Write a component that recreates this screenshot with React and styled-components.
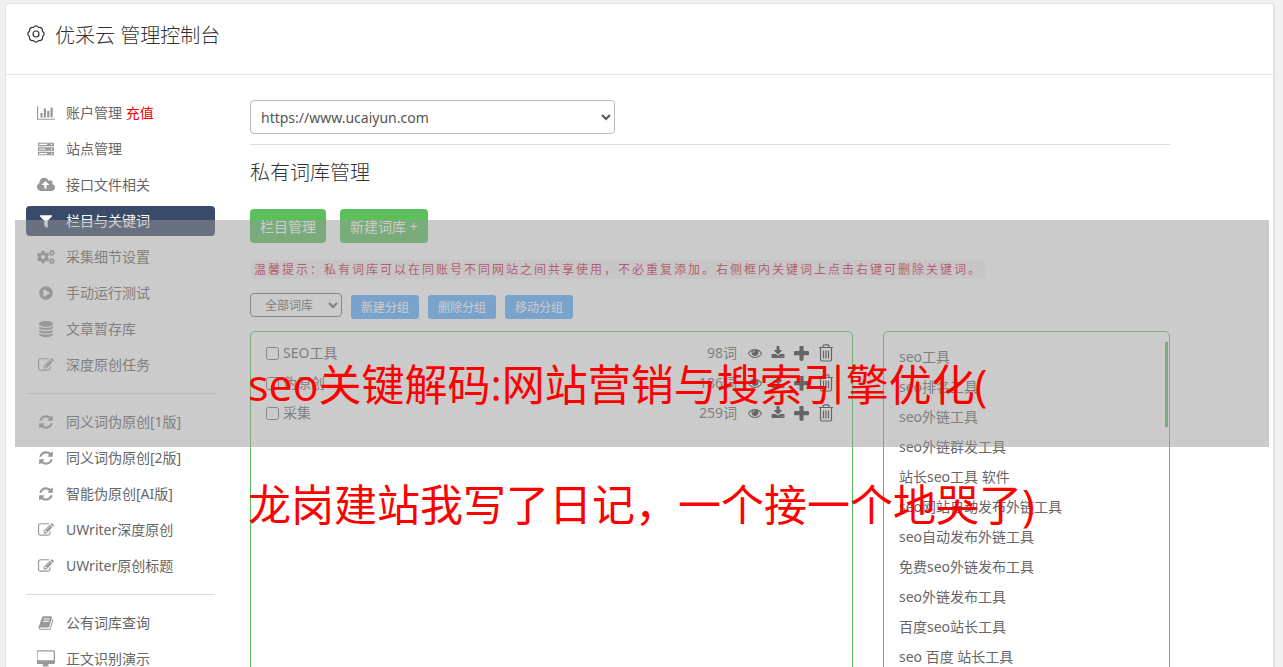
import React from 'react';
import styled, { createGlobalStyle } from 'styled-components';
import { FaCogs, FaPlayCircle } from 'react-icons/fa';

const ICONS = {
  chart: ['0 0 2048 1792', 'M640 896v512h-256v-512h256zm384-512v1024h-256v-1024h256zm1024 1152v128h-2048v-1536h128v1408h1920zm-640-896v768h-256v-768h256zm384-384v1152h-256v-1152h256z'],
  server: ['0 0 1792 1792', 'M0 192h1792v384h-1792zM128 320v128h900v-128zM1440 310v140h150v-140zM0 704h1792v384h-1792zM128 832v128h700v-128zM1440 822v140h150v-140zM0 1216h1792v384h-1792zM128 1344v128h900v-128zM1440 1334v140h150v-140z'],
  cloud: ['0 0 1920 1792', 'M1280 864q0-14-9-23l-352-352q-9-9-23-9t-23 9l-351 351q-10 12-10 24 0 14 9 23t23 9h224v352q0 13 9.5 22.5t22.5 9.5h192q13 0 22.5-9.5t9.5-22.5v-352h224q13 0 22.5-9.5t9.5-22.5zm640 288q0 159-112.5 271.5t-271.5 112.5h-1088q-185 0-316.5-131.5t-131.5-316.5q0-130 70-240t188-165q-2-30-2-43 0-212 150-362t362-150q156 0 285.5 87t188.5 231q71-62 166-62 106 0 181 75t75 181q0 76-41 138 130 31 213.5 135.5t83.5 238.5z'],
  filter: ['0 0 1792 1792', 'M1595 295q17 41-14 70l-493 493v742q0 42-39 59-13 5-25 5-27 0-45-19l-256-256q-19-19-19-45v-486l-493-493q-31-29-14-70 17-39 59-39h1280q42 0 59 39z'],
  database: ['0 0 1792 1792', 'M896 768q237 0 443-43t325-127v170q0 69-103 128t-280 93.5-385 34.5-385-34.5-280-93.5-103-128v-170q119 84 325 127t443 43zm0 768q237 0 443-43t325-127v170q0 69-103 128t-280 93.5-385 34.5-385-34.5-280-93.5-103-128v-170q119 84 325 127t443 43zm0-384q237 0 443-43t325-127v170q0 69-103 128t-280 93.5-385 34.5-385-34.5-280-93.5-103-128v-170q119 84 325 127t443 43zm0-1152q208 0 385 34.5t280 93.5 103 128v128q0 69-103 128t-280 93.5-385 34.5-385-34.5-280-93.5-103-128v-128q0-69 103-128t280-93.5 385-34.5z'],
  edit: ['0 0 1792 1792', 'M888 1184l116-116-152-152-116 116v56h96v96h56zm440-720q-16-16-33 1l-350 350q-17 17-1 33t33-1l350-350q17-17 1-33zm80 594v190q0 119-84.5 203.5t-203.5 84.5h-832q-119 0-203.5-84.5t-84.5-203.5v-832q0-119 84.5-203.5t203.5-84.5h832q63 0 117 25 15 7 18 23 3 17-9 29l-49 49q-14 14-32 8-23-6-45-6h-832q-66 0-113 47t-47 113v832q0 66 47 113t113 47h832q66 0 113-47t47-113v-126q0-13 9-22l64-64q15-15 35-7t20 29zm-96-738l288 288-672 672h-288v-288zm444 132l-92 92-288-288 92-92q28-28 68-28t68 28l152 152q28 28 28 68t-28 68z'],
  refresh: ['0 0 1792 1792', 'M1639 1056q0 5-1 7-64 268-268 434.5t-478 166.5q-146 0-282.5-55t-243.5-157l-129 129q-19 19-45 19t-45-19-19-45v-448q0-26 19-45t45-19h448q26 0 45 19t19 45-19 45l-137 137q71 66 161 102t187 36q134 0 250-65t186-179q11-17 53-117 8-23 30-23h192q13 0 22.5 9.5t9.5 22.5zm25-800v448q0 26-19 45t-45 19h-448q-26 0-45-19t-19-45 19-45l138-138q-148-137-349-137-134 0-250 65t-186 179q-11 17-53 117-8 23-30 23h-199q-13 0-22.5-9.5t-9.5-22.5v-7q65-268 270-434.5t480-166.5q146 0 284 55.5t245 156.5l130-129q19-19 45-19t45 19 19 45z'],
  book: ['0 0 1792 1792', 'M1703 478q40 57 18 129l-275 906q-19 64-76.5 107.5t-122.5 43.5h-923q-77 0-148.5-53.5t-99.5-131.5q-24-67-2-127 0-4 3-27t4-37q1-8-3-21.5t-3-19.5q2-11 8-21t16.5-23.5 16.5-23.5q23-38 45-91.5t30-91.5q3-10 .5-30t-.5-28q3-11 17-28t17-23q21-36 42-92t25-90q1-9-2.5-32t.5-28q4-13 22-30.5t22-22.5q19-26 42.5-84.5t27.5-96.5q1-8-3-25.5t-2-26.5q2-8 9-18t18-23 17-21q8-12 16.5-30.5t15-35 16-36 19.5-32 26.5-23.5 36-11.5 47.5 5.5l-1 3q38-9 51-9h761q74 0 114 56t18 130l-274 906q-36 119-71.5 153.5t-128.5 34.5h-869q-27 0-38 15-11 16-1 43 24 70 144 70h923q29 0 56-15.5t35-41.5l300-987q7-22 5-57 38 15 59 43zm-1064 2q-4 13 2 22.5t20 9.5h608q13 0 25.5-9.5t16.5-22.5l21-64q4-13-2-22.5t-20-9.5h-608q-13 0-25.5 9.5t-16.5 22.5zm-83 256q-4 13 2 22.5t20 9.5h608q13 0 25.5-9.5t16.5-22.5l21-64q4-13-2-22.5t-20-9.5h-608q-13 0-25.5 9.5t-16.5 22.5z'],
  desktop: ['0 0 1856 1792', 'M1728 992v-832q0-13-9.5-22.5t-22.5-9.5h-1600q-13 0-22.5 9.5t-9.5 22.5v832q0 13 9.5 22.5t22.5 9.5h1600q13 0 22.5-9.5t9.5-22.5zm128-832v1088q0 66-47 113t-113 47h-544q0 37 16 77.5t32 71 16 43.5q0 26-19 45t-45 19h-512q-26 0-45-19t-19-45q0-14 16-44t32-70 16-78h-544q-66 0-113-47t-47-113v-1088q0-66 47-113t113-47h1600q66 0 113 47t47 113z'],
  eye: ['0 0 1792 1792', 'M1664 960q-152-236-381-353 61 104 61 225 0 185-131.5 316.5t-316.5 131.5-316.5-131.5-131.5-316.5q0-121 61-225-229 117-381 353 133 205 333.5 326.5t434.5 121.5 434.5-121.5 333.5-326.5zm-720-384q0-20-14-34t-34-14q-125 0-214.5 89.5t-89.5 214.5q0 20 14 34t34 14 34-14 14-34q0-86 61-147t147-61q20 0 34-14t14-34zm848 384q0 34-20 69-140 230-376.5 368.5t-499.5 138.5-499.5-139-376.5-368q-20-35-20-69t20-69q140-229 376.5-368t499.5-139 499.5 139 376.5 368q20 35 20 69z'],
  download: ['0 0 1792 1792', 'M1344 1344q0-26-19-45t-45-19-45 19-19 45 19 45 45 19 45-19 19-45zm256 0q0-26-19-45t-45-19-45 19-19 45 19 45 45 19 45-19 19-45zm128-224v320q0 40-28 68t-68 28h-1472q-40 0-68-28t-28-68v-320q0-40 28-68t68-28h465l135 136q58 56 136 56t136-56l136-136h464q40 0 68 28t28 68zm-325-569q17 41-14 70l-448 448q-18 19-45 19t-45-19l-448-448q-31-29-14-70 17-39 59-39h256v-448q0-26 19-45t45-19h256q26 0 45 19t19 45v448h256q42 0 59 39z'],
  plus: ['192 160 1408 1408', 'M1600 736v192q0 40-28 68t-68 28h-416v416q0 40-28 68t-68 28h-192q-40 0-68-28t-28-68v-416h-416q-40 0-68-28t-28-68v-192q0-40 28-68t68-28h416v-416q0-40 28-68t68-28h192q40 0 68 28t28 68v416h416q40 0 68 28t28 68z'],
};

const Icon = ({ name, size = 16 }) => {
  if (name === 'cogs') return <FaCogs size={18} />;
  if (name === 'play') return <FaPlayCircle size={14} />;
  const [box, d] = ICONS[name];
  return (
    <svg width={size} height={size} viewBox={box} fill="currentColor" aria-hidden="true">
      <path fillRule="evenodd" d={d} />
    </svg>
  );
};

const GearIcon = () => (
  <svg width="20" height="20" viewBox="0 0 20 20" fill="none" stroke="currentColor" strokeWidth="1.2" aria-hidden="true">
    <path d="M16.500 12.700Q16.900 16.900 12.700 16.500Q10 19.900 7.300 16.500Q3.100 16.900 3.500 12.700Q.1 10 3.500 7.300Q3.100 3.100 7.300 3.500Q10 .1 12.700 3.500Q16.900 3.100 16.500 7.300Q19.900 10 16.500 12.700z" />
    <circle cx="10" cy="10" r="3" />
  </svg>
);

const TrashIcon = () => (
  <svg width="16" height="18" viewBox="0 0 16 18" fill="none" stroke="currentColor" strokeWidth="1.2" aria-hidden="true">
    <path d="M1 3.500h14M5 3.400V2q0-1.200 1.200-1.200h3.600q1.200 0 1.200 1.200v1.400M2.500 3.800v11.500q0 1.700 1.500 1.700h8q1.500 0 1.500-1.700V3.800M5.500 6.500v8M8 6.500v8M10.500 6.500v8" />
  </svg>
);

const MENU = [
  [
    { icon: 'chart', text: '账户管理', extra: '充值' },
    { icon: 'server', text: '站点管理' },
    { icon: 'cloud', text: '接口文件相关' },
    { icon: 'filter', text: '栏目与关键词', active: true },
    { icon: 'cogs', text: '采集细节设置' },
    { icon: 'play', text: '手动运行测试' },
    { icon: 'database', text: '文章暂存库' },
    { icon: 'edit', text: '深度原创任务' },
  ],
  [
    { icon: 'refresh', text: '同义词伪原创[1版]' },
    { icon: 'refresh', text: '同义词伪原创[2版]' },
    { icon: 'refresh', text: '智能伪原创[AI版]' },
    { icon: 'edit', text: 'UWriter深度原创' },
    { icon: 'edit', text: 'UWriter原创标题' },
  ],
  [
    { icon: 'book', text: '公有词库查询' },
    { icon: 'desktop', text: '正文识别演示' },
  ],
];

const LIBS = [
  { name: 'SEO工具', count: 98 },
  { name: '伪原创', count: 186 },
  { name: '采集', count: 259 },
];

const WORDS = [
  'seo工具',
  'seo排名工具',
  'seo外链工具',
  'seo外链群发工具',
  '站长seo工具 软件',
  'seo网站自动发布外链工具',
  'seo自动发布外链工具',
  '免费seo外链发布工具',
  'seo外链发布工具',
  '百度seo站长工具',
  'seo 百度 站长工具',
];

const App = () => {
  return (
    <>
      <GlobalStyle />
      <Page>
        <Header>
          <GearIcon />
          <Title>优采云 管理控制台</Title>
        </Header>
        <Body>
          <Sidebar>
            {MENU.map((group, i) => (
              <MenuGroup key={i}>
                {group.map(({ icon, text, extra, active }) => (
                  <li key={text}>
                    <MenuLink href="#" $active={active}>
                      <MenuIcon $active={active}>
                        <Icon name={icon} size={icon === 'chart' || icon === 'cloud' || icon === 'desktop' ? 18 : 16} />
                      </MenuIcon>
                      <span>
                        {text} {extra && <Recharge>{extra}</Recharge>}
                      </span>
                    </MenuLink>
                  </li>
                ))}
              </MenuGroup>
            ))}
          </Sidebar>
          <Content>
            <SiteBar>
              <SiteSelect aria-label="站点">
                <option>https://www.ucaiyun.com</option>
              </SiteSelect>
            </SiteBar>
            <SubTitle>私有词库管理</SubTitle>
            <ButtonRow>
              <GreenButton>栏目管理</GreenButton>
              <GreenButton>新建词库 +</GreenButton>
            </ButtonRow>
            <Tip>温馨提示：私有词库可以在同账号不同网站之间共享使用，不必重复添加。右侧框内关键词上点击右键可删除关键词。</Tip>
            <GroupBar>
              <GroupSelect aria-label="词库分组">
                <option>全部词库</option>
              </GroupSelect>
              <BlueButton>新建分组</BlueButton>
              <BlueButton>删除分组</BlueButton>
              <BlueButton>移动分组</BlueButton>
            </GroupBar>
            <Panels>
              <LibPanel>
                {LIBS.map(({ name, count }) => (
                  <LibRow key={name}>
                    <LibLabel>
                      <Check type="checkbox" />
                      {name}
                    </LibLabel>
                    <Count>{count}词</Count>
                    <Actions>
                      <ActionButton aria-label="查看"><Icon name="eye" size={14} /></ActionButton>
                      <ActionButton aria-label="下载"><Icon name="download" size={14} /></ActionButton>
                      <ActionButton aria-label="添加"><Icon name="plus" size={15} /></ActionButton>
                      <ActionButton aria-label="删除"><TrashIcon /></ActionButton>
                    </Actions>
                  </LibRow>
                ))}
              </LibPanel>
              <WordPanel>
                <WordList>
                  {WORDS.map((word) => (
                    <li key={word}>{word}</li>
                  ))}
                </WordList>
                <ScrollThumb />
              </WordPanel>
            </Panels>
          </Content>
        </Body>
      </Page>
      <Shade />
      <Caption>
        <p>seo关键解码:网站营销与搜索引擎优化(</p>
        <p>龙岗建站我写了日记，一个接一个地哭了)</p>
      </Caption>
    </>
  );
};

const GlobalStyle = createGlobalStyle`
* {
  box-sizing: border-box;
}
html {
  height: 100%;
  overflow: hidden;
}
body {
  margin: 0;
  height: 100%;
  overflow: hidden;
  background-color: #f1f1f1;
  color: #666;
  font-family: "Noto Sans", "Noto Sans CJK SC", sans-serif;
  font-size: 14px;
  font-weight: 400;
  line-height: 20px;
}
button, select, input {
  font-family: inherit;
  font-weight: inherit;
}
ul, p {
  margin: 0;
  padding: 0;
  list-style: none;
}
`;

const Page = styled.div`
margin: 3px 8px 0 5px;
border: 1px solid #e4e4e4;
border-right-width: 2px;
border-radius: 4px 4px 0 0;
background-color: #fff;
`;

const Header = styled.header`
display: flex;
align-items: center;
height: 71px;
padding: 0 20px 10px;
gap: 9px;
border-bottom: 1px solid #e4e4e4;
color: #333;
`;

const Title = styled.h1`
margin: 0;
padding-top: 4px;
font-size: 20px;
font-weight: 300;
line-height: 30px;
`;

const Body = styled.div`
display: flex;
padding: 23px 103px 0 20px;
gap: 35px;
`;

const Sidebar = styled.nav`
flex: 0 0 189px;
`;

const MenuGroup = styled.ul`
display: flex;
flex-direction: column;
gap: 6px;

& + & {
  margin-top: 13px;
  padding-top: 13px;
  border-top: 1px solid #ddd;
}
`;

const MenuLink = styled.a`
display: flex;
align-items: center;
height: 30px;
padding-left: 10px;
gap: 10px;
border-radius: 4px;
background-color: ${(props) => (props.$active ? '#3a4b69' : 'transparent')};
color: ${(props) => (props.$active ? '#fff' : '#666')};
text-decoration: none;
`;

const MenuIcon = styled.span`
display: flex;
justify-content: center;
width: 20px;
color: ${(props) => (props.$active ? '#fff' : '#999')};
`;

const Recharge = styled.span`
color: #f00;
`;

const Content = styled.main`
flex: 1;
min-width: 0;
padding-top: 2px;
`;

const SiteBar = styled.div`
padding-bottom: 10px;
border-bottom: 1px solid #ddd;
`;

const SiteSelect = styled.select`
display: block;
width: 365px;
height: 34px;
padding: 0 6px;
border: 1px solid #bbb;
border-radius: 4px;
background-color: #fff;
color: #555;
font-size: 14px;
`;

const SubTitle = styled.h2`
margin: 13px 0 21px;
color: #333;
font-size: 20px;
font-weight: 300;
line-height: 30px;
`;

const ButtonRow = styled.div`
display: flex;
gap: 14px;
`;

const GreenButton = styled.button`
height: 34px;
padding: 0 10px;
border: none;
border-radius: 4px;
background-color: #5cbf5c;
color: #fff;
font-size: 14px;
`;

const Tip = styled.p`
width: fit-content;
margin-top: 17px;
padding: 0 4px;
border-radius: 4px;
background-color: #f9f2f4;
color: #c7254e;
font-size: 12px;
line-height: 19px;
letter-spacing: 2px;
white-space: nowrap;
`;

const GroupBar = styled.div`
display: flex;
align-items: flex-end;
margin-top: 14px;
gap: 9px;
`;

const GroupSelect = styled.select`
align-self: flex-start;
width: 92px;
height: 24px;
padding: 0 10px;
border: 1px solid #767676;
border-radius: 4px;
background-color: #fff;
color: #666;
font-size: 12px;
`;

const BlueButton = styled.button`
height: 24px;
margin-top: 2px;
padding: 0 10px;
border: none;
border-radius: 3px;
background-color: #5dafff;
color: #fff;
font-size: 12px;
`;

const Panels = styled.div`
display: flex;
margin-top: 12px;
gap: 30px;
height: 480px;
`;

const Panel = styled.div`
border: 1px solid #5cbf5c;
border-radius: 5px;
`;

const LibPanel = styled(Panel)`
flex: 1;
padding: 6px 18px 0 15px;
`;

const LibRow = styled.div`
display: flex;
align-items: center;
height: 30px;
`;

const LibLabel = styled.label`
display: flex;
align-items: center;
gap: 4px;
`;

const Check = styled.input`
width: 13px;
height: 13px;
margin: 0;
`;

const Count = styled.span`
margin-left: auto;
`;

const Actions = styled.div`
display: flex;
align-items: center;
margin-left: 11px;
gap: 9px;
`;

const ActionButton = styled.button`
display: flex;
align-items: center;
padding: 0;
border: none;
background: none;
color: #333;
`;

const WordPanel = styled(Panel)`
display: flex;
flex: 0 0 287px;
justify-content: space-between;
padding: 10px 1px 0 15px;
`;

const WordList = styled.ul`
line-height: 30px;
color: #666;
`;

const ScrollThumb = styled.div`
width: 3px;
height: 85px;
background-color: #5cbf5c;
`;

const Shade = styled.div`
position: absolute;
top: 220px;
left: 15px;
right: 14px;
height: 227px;
background-color: rgba(151, 151, 151, 0.5);
pointer-events: none;
`;

const Caption = styled.div`
position: absolute;
top: 325px;
left: 248px;
color: #f00;
font-family: "Open Sans", "Noto Sans CJK SC", sans-serif;
font-size: 43px;
line-height: 120px;
white-space: nowrap;
pointer-events: none;
`;

export default App;
